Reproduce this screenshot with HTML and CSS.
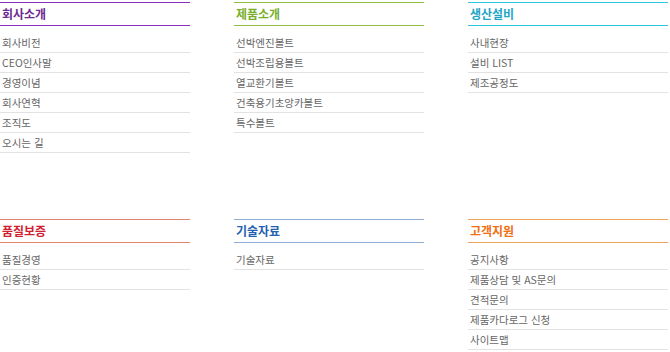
FILE: index.html
```html
<!DOCTYPE html>
<html lang="ko">
<head>
<meta charset="utf-8">
<title>사이트맵</title>
<link rel="stylesheet" href="styles.css">
</head>
<body>
<div class="sitemap">
  <section class="sec purple">
    <h2>회사소개</h2>
    <ul>
      <li>회사비전</li>
      <li>CEO인사말</li>
      <li>경영이념</li>
      <li>회사연혁</li>
      <li>조직도</li>
      <li>오시는 길</li>
    </ul>
  </section>
  <section class="sec green">
    <h2>제품소개</h2>
    <ul>
      <li>선박엔진볼트</li>
      <li>선박조립용볼트</li>
      <li>열교환기볼트</li>
      <li>건축용기초앙카볼트</li>
      <li>특수볼트</li>
    </ul>
  </section>
  <section class="sec cyan">
    <h2>생산설비</h2>
    <ul>
      <li>사내현장</li>
      <li>설비 LIST</li>
      <li>제조공정도</li>
    </ul>
  </section>
  <section class="sec red">
    <h2>품질보증</h2>
    <ul>
      <li>품질경영</li>
      <li>인증현황</li>
    </ul>
  </section>
  <section class="sec blue">
    <h2>기술자료</h2>
    <ul>
      <li>기술자료</li>
    </ul>
  </section>
  <section class="sec orange">
    <h2>고객지원</h2>
    <ul>
      <li>공지사항</li>
      <li>제품상담 및 AS문의</li>
      <li>견적문의</li>
      <li>제품카다로그 신청</li>
      <li>사이트맵</li>
    </ul>
  </section>
</div>
</body>
</html>
```

FILE: styles.css
```css
html, body {
  margin: 0;
  padding: 0;
  background: #ffffff;
}
body {
  font-family: "Noto Sans CJK KR", "Noto Sans", sans-serif;
}
.sitemap {
  display: grid;
  grid-template-columns: 190px 190px 200px;
  grid-template-rows: 217px auto;
  column-gap: 44px;
  padding-top: 2px;
}
.sec h2 {
  margin: 0;
  height: 22px;
  line-height: 22px;
  font-size: 12px;
  font-weight: bold;
  padding-left: 2px;
  border-top: 1px solid;
  border-bottom: 1px solid;
}
.sec ul {
  list-style: none;
  margin: 7px 0 0;
  padding: 0;
}
.sec li {
  height: 19px;
  line-height: 19px;
  font-size: 10.5px;
  color: #666666;
  padding-left: 2px;
  border-bottom: 1px solid #e2e2e2;
}
.purple h2 { color: #6e2a91; border-color: #8a2fbf; }
.green h2 { color: #78b02c; border-color: #8fbf45; }
.cyan h2 { color: #1fa5c6; border-color: #2ac6dd; }
.red h2 { color: #d22030; border-color: #e08572; }
.blue h2 { color: #2462b0; border-color: #8eaed6; }
.orange h2 { color: #ef6f12; border-color: #f0a458; }
```
